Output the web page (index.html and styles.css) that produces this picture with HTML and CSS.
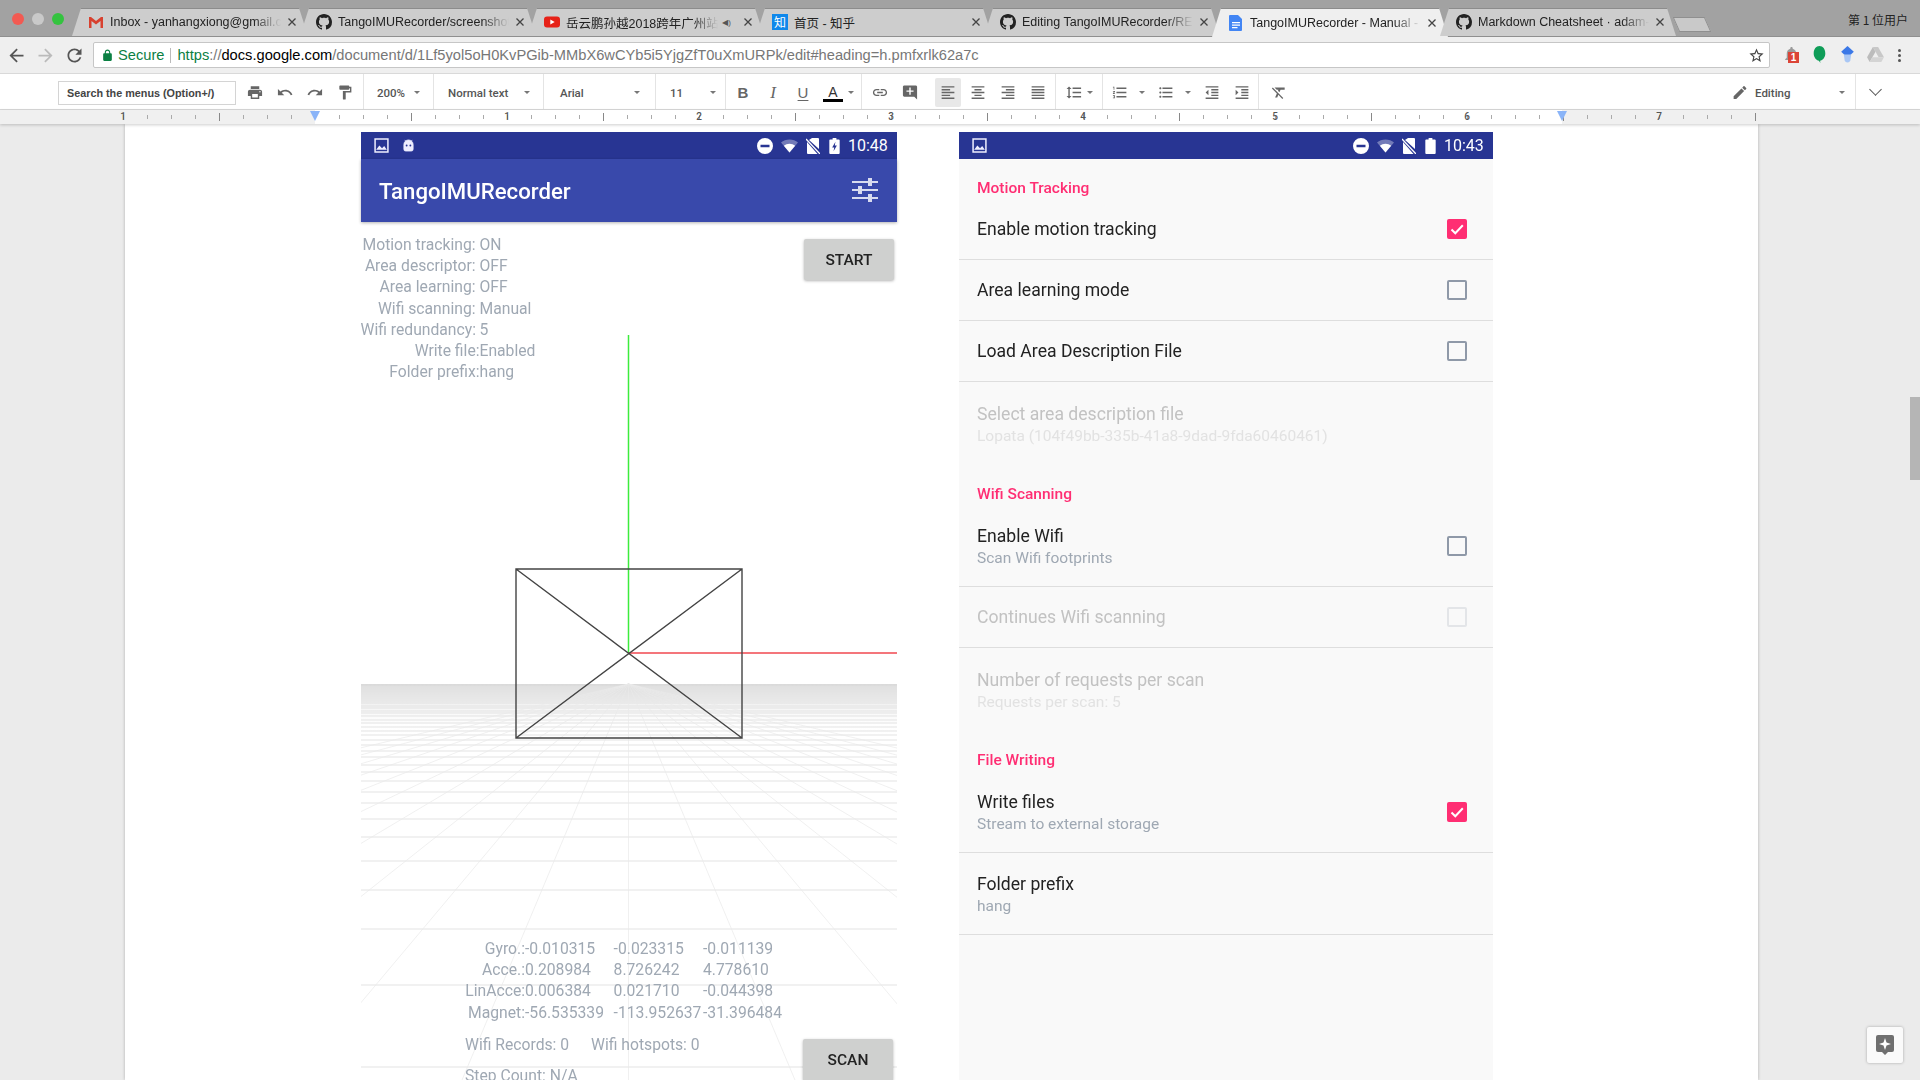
FILE: index.html
```html
<!DOCTYPE html>
<html lang="en">
<head>
  <meta charset="UTF-8" />
  <title>TangoIMURecorder - Manual - Google Docs</title>
  <link rel="stylesheet" href="styles.css">
</head>
<body>
  <svg class="defs" width="0" height="0">
    <symbol id="gh" viewBox="0 0 16 16"><path d="M8 0C3.58 0 0 3.58 0 8c0 3.54 2.29 6.53 5.47 7.59.4.07.55-.17.55-.38 0-.19-.01-.82-.01-1.49-2.01.37-2.53-.49-2.69-.94-.09-.23-.48-.94-.82-1.13-.28-.15-.68-.52-.01-.53.63-.01 1.08.58 1.23.82.72 1.21 1.87.87 2.33.66.07-.52.28-.87.51-1.07-1.78-.2-3.64-.89-3.64-3.95 0-.87.31-1.59.82-2.15-.08-.2-.36-1.02.08-2.12 0 0 .67-.21 2.2.82.64-.18 1.32-.27 2-.27.68 0 1.36.09 2 .27 1.53-1.04 2.2-.82 2.2-.82.44 1.1.16 1.92.08 2.12.51.56.82 1.27.82 2.15 0 3.07-1.87 3.75-3.65 3.95.29.25.54.73.54 1.48 0 1.07-.01 1.93-.01 2.2 0 .21.15.46.55.38A8.013 8.013 0 0016 8c0-4.42-3.58-8-8-8z"/></symbol>
    <symbol id="close" viewBox="0 0 10 10"><path d="M1.5 1.5l7 7M8.5 1.5l-7 7" stroke="#444" stroke-width="1.3" fill="none"/></symbol>
    <symbol id="print" viewBox="0 0 24 24"><path d="M19 8H5c-1.66 0-3 1.34-3 3v6h4v4h12v-4h4v-6c0-1.66-1.34-3-3-3zm-3 11H8v-5h8v5zm3-7c-.55 0-1-.45-1-1s.45-1 1-1 1 .45 1 1-.45 1-1 1zm-1-9H6v4h12V3z"/></symbol>
    <symbol id="undo" viewBox="0 0 24 24"><path d="M12.5 8c-2.65 0-5.05.99-6.9 2.6L2 7v9h9l-3.62-3.62c1.39-1.16 3.16-1.88 5.12-1.88 3.54 0 6.55 2.31 7.6 5.5l2.37-.78C21.08 11.03 17.15 8 12.5 8z"/></symbol>
    <symbol id="redo" viewBox="0 0 24 24"><path d="M18.4 10.6C16.55 8.99 14.15 8 11.5 8c-4.65 0-8.58 3.03-9.96 7.22L3.9 16c1.05-3.19 4.05-5.5 7.6-5.5 1.95 0 3.73.72 5.12 1.88L13 16h9V7l-3.6 3.6z"/></symbol>
    <symbol id="paint" viewBox="0 0 24 24"><path d="M18 4V3c0-.55-.45-1-1-1H5c-.55 0-1 .45-1 1v4c0 .55.45 1 1 1h12c.55 0 1-.45 1-1V6h1v4H9v11c0 .55.45 1 1 1h2c.55 0 1-.45 1-1v-9h8V4h-3z"/></symbol>
    <symbol id="link" viewBox="0 0 24 24"><path d="M3.9 12c0-1.71 1.39-3.1 3.1-3.1h4V7H7c-2.76 0-5 2.24-5 5s2.24 5 5 5h4v-1.9H7c-1.71 0-3.1-1.39-3.1-3.1zM8 13h8v-2H8v2zm9-6h-4v1.9h4c1.71 0 3.1 1.39 3.1 3.1s-1.39 3.1-3.1 3.1h-4V17h4c2.76 0 5-2.24 5-5s-2.24-5-5-5z"/></symbol>
    <symbol id="comment" viewBox="0 0 24 24"><path d="M20 2H4c-1.1 0-2 .9-2 2v12c0 1.1.9 2 2 2h14l4 4V4c0-1.1-.9-2-2-2zm-3 9h-4v4h-2v-4H7V9h4V5h2v4h4v2z"/></symbol>
    <symbol id="left" viewBox="0 0 24 24"><path d="M15 15H3v2h12v-2zm0-8H3v2h12V7zM3 13h18v-2H3v2zm0 8h18v-2H3v2zM3 3v2h18V3H3z"/></symbol>
    <symbol id="center" viewBox="0 0 24 24"><path d="M7 15v2h10v-2H7zm-4 6h18v-2H3v2zm0-8h18v-2H3v2zm4-6v2h10V7H7zM3 3v2h18V3H3z"/></symbol>
    <symbol id="right" viewBox="0 0 24 24"><path d="M3 21h18v-2H3v2zm6-4h12v-2H9v2zm-6-4h18v-2H3v2zm6-4h12V7H9v2zM3 3v2h18V3H3z"/></symbol>
    <symbol id="justify" viewBox="0 0 24 24"><path d="M3 21h18v-2H3v2zm0-4h18v-2H3v2zm0-4h18v-2H3v2zm0-4h18V7H3v2zm0-6v2h18V3H3z"/></symbol>
    <symbol id="spacing" viewBox="0 0 24 24"><path d="M6 7h2.5L5 3.5 1.5 7H4v10H1.5L5 20.5 8.5 17H6V7zm4-2v2h12V5H10zm0 14h12v-2H10v2zm0-6h12v-2H10v2z"/></symbol>
    <symbol id="numbers" viewBox="0 0 24 24"><path d="M2 17h2v.5H3v1h1v.5H2v1h3v-4H2v1zm1-9h1V4H2v1h1v3zm-1 3h1.8L2 13.1v.9h3v-1H3.2L5 10.9V10H2v1zm5-6v2h14V5H7zm0 14h14v-2H7v2zm0-6h14v-2H7v2z"/></symbol>
    <symbol id="bullets" viewBox="0 0 24 24"><path d="M4 10.5c-.83 0-1.5.67-1.5 1.5s.67 1.5 1.5 1.5 1.5-.67 1.5-1.5-.67-1.5-1.5-1.5zm0-6c-.83 0-1.5.67-1.5 1.5S3.17 7.5 4 7.5 5.5 6.83 5.5 6 4.83 4.5 4 4.5zm0 12c-.83 0-1.5.68-1.5 1.5s.68 1.5 1.5 1.5 1.5-.68 1.5-1.5-.67-1.5-1.5-1.5zM7 19h14v-2H7v2zm0-6h14v-2H7v2zm0-8v2h14V5H7z"/></symbol>
    <symbol id="outdent" viewBox="0 0 24 24"><path d="M11 17h10v-2H11v2zm-8-5l4 4V8l-4 4zm0 9h18v-2H3v2zM3 3v2h18V3H3zm8 6h10V7H11v2zm0 4h10v-2H11v2z"/></symbol>
    <symbol id="indent" viewBox="0 0 24 24"><path d="M3 21h18v-2H3v2zM3 8v8l4-4-4-4zm8 9h10v-2H11v2zM3 3v2h18V3H3zm8 6h10V7H11v2zm0 4h10v-2H11v2z"/></symbol>
    <symbol id="clear" viewBox="0 0 24 24"><path d="M3.27 5L2 6.27l6.97 6.97L6.5 19h3l1.57-3.66L16.73 21 18 19.73 3.55 5.27 3.27 5zM6 5v.18L8.82 8h2.4l-.72 1.68 2.1 2.1L14.21 8H20V5H6z"/></symbol>
    <symbol id="image" viewBox="0 0 14 14"><path d="M1 1h12v12H1z" fill="none" stroke="currentColor" stroke-width="1.4"/><path d="M2 11l3-4 2.5 2.5L9.5 7.5 12 11z" fill="currentColor"/></symbol>
    <symbol id="dnd" viewBox="0 0 16 16"><path fill-rule="evenodd" d="M8 0a8 8 0 100 16A8 8 0 008 0zM3.5 6.8h9v2.4h-9z" fill="currentColor"/></symbol>
    <symbol id="wifi" viewBox="0 0 18 14"><path d="M9 14L0 3.2C2.4 1.2 5.6 0 9 0s6.600 1.200 9 3.200z" fill="currentColor" opacity=".35"/><path d="M9 14L3 6.800C4.600 5.500 6.700 4.700 9 4.700s4.400.8 6 2.100z" fill="currentColor"/></symbol>
    <symbol id="nosim" viewBox="0 0 14 16"><path d="M3 2L6 0h6a1 1 0 011 1v10zM1 4v11a1 1 0 001 1h9.500z" fill="currentColor"/><path d="M0 1l14 15" stroke="currentColor" stroke-width="1.300"/></symbol>
    <symbol id="check" viewBox="0 0 20 20"><path d="M4.500 10.500l3.800 3.800 7.500-8" fill="none" stroke="#fff" stroke-width="2"/></symbol>
  </svg>

  <div class="chrome-top">
    <div class="traffic">
      <span class="dot red"></span><span class="dot grey"></span><span class="dot green"></span>
    </div>
    <div class="tabs">
      <div class="tab">
        <svg class="favicon" viewBox="0 0 16 16"><path d="M1 3h2l5 4 5-4h2v11h-2.500V7L8 10.500 3.500 7v7H1z" fill="#d8412f"/></svg>
        <span class="tab-title">Inbox - yanhangxiong@gmail.c</span>
        <svg class="tab-close"><use href="#close"/></svg>
      </div>
      <div class="tab">
        <svg class="favicon dark"><use href="#gh"/></svg>
        <span class="tab-title">TangoIMURecorder/screenshot</span>
        <svg class="tab-close"><use href="#close"/></svg>
      </div>
      <div class="tab">
        <svg class="favicon" viewBox="0 0 16 16"><rect x="0" y="2.500" width="16" height="11" rx="3" fill="#e62117"/><path d="M6.300 5.500v5l4.400-2.500z" fill="#fff"/></svg>
        <span class="tab-title short">岳云鹏孙越2018跨年广州站</span>
        <span class="speaker">◀)</span>
        <svg class="tab-close"><use href="#close"/></svg>
      </div>
      <div class="tab">
        <span class="favicon zhihu">知</span>
        <span class="tab-title plain">首页 - 知乎</span>
        <svg class="tab-close"><use href="#close"/></svg>
      </div>
      <div class="tab">
        <svg class="favicon dark"><use href="#gh"/></svg>
        <span class="tab-title">Editing TangoIMURecorder/RE</span>
        <svg class="tab-close"><use href="#close"/></svg>
      </div>
      <div class="tab active">
        <svg class="favicon" viewBox="0 0 16 16"><path d="M2 0h8l4 4v11a1 1 0 01-1 1H2a1 1 0 01-1-1V1a1 1 0 011-1z" fill="#4285f4"/><path d="M4 7h8v1.200H4zM4 9.500h8v1.200H4zM4 12h5.500v1.200H4z" fill="#fff"/></svg>
        <span class="tab-title">TangoIMURecorder - Manual -</span>
        <svg class="tab-close"><use href="#close"/></svg>
      </div>
      <div class="tab">
        <svg class="favicon dark"><use href="#gh"/></svg>
        <span class="tab-title">Markdown Cheatsheet · adam-</span>
        <svg class="tab-close"><use href="#close"/></svg>
      </div>
      <div class="new-tab"></div>
    </div>
    <div class="profile">第 1 位用户</div>
  </div>

  <div class="nav-bar">
    <svg class="nav-ic" viewBox="0 0 24 24"><path d="M20 11H7.830l5.590-5.590L12 4l-8 8 8 8 1.410-1.410L7.830 13H20v-2z"/></svg>
    <svg class="nav-ic off" viewBox="0 0 24 24"><path d="M12 4l-1.410 1.410L16.170 11H4v2h12.170l-5.580 5.590L12 20l8-8z"/></svg>
    <svg class="nav-ic" viewBox="0 0 24 24"><path d="M17.650 6.350C16.200 4.900 14.210 4 12 4c-4.420 0-7.990 3.580-7.990 8s3.570 8 7.990 8c3.730 0 6.840-2.550 7.730-6h-2.080c-.82 2.330-3.040 4-5.650 4-3.310 0-6-2.690-6-6s2.690-6 6-6c1.660 0 3.140.69 4.220 1.780L13 11h7V4l-2.350 2.350z"/></svg>
    <div class="omnibox">
      <svg class="lock" viewBox="0 0 24 24"><path d="M18 8h-1V6c0-2.760-2.240-5-5-5S7 3.240 7 6v2H6c-1.100 0-2 .9-2 2v10c0 1.100.9 2 2 2h12c1.100 0 2-.9 2-2V10c0-1.100-.9-2-2-2zM9 6c0-1.660 1.340-3 3-3s3 1.340 3 3v2H9V6z"/></svg>
      <span class="secure">Secure</span>
      <span class="url"><span class="scheme">https</span>://<span class="host">docs.google.com</span>/document/d/1Lf5yol5oH0KvPGib-MMbX6wCYb5i5YjgZfT0uXmURPk/edit#heading=h.pmfxrlk62a7c</span>
      <svg class="star" viewBox="0 0 24 24"><path d="M22 9.240l-7.190-.62L12 2 9.190 8.630 2 9.240l5.460 4.730L5.820 21 12 17.270 18.180 21l-1.630-7.030L22 9.240zM12 15.400l-3.760 2.270 1-4.280-3.320-2.880 4.380-.38L12 6.100l1.710 4.040 4.380.38-3.320 2.880 1 4.280L12 15.400z"/></svg>
    </div>
    <div class="extensions">
      <span class="ext bell">
        <svg viewBox="0 0 24 24"><path d="M12 22c1.100 0 2-.9 2-2h-4c0 1.100.9 2 2 2zm6-6v-5c0-3.070-1.640-5.640-4.500-6.320V4c0-.83-.67-1.500-1.500-1.500s-1.500.67-1.500 1.500v.68C7.630 5.360 6 7.920 6 11v5l-2 2v1h16v-1l-2-2z" fill="#9a9a9a"/></svg>
        <span class="badge">1</span>
      </span>
      <span class="ext">
        <svg viewBox="0 0 18 18"><path d="M9 1c3.300 0 5.500 3 5.500 7 0 3.600-2.400 6.400-5 7l.4 2-1.500-2C6 14.400 3.500 11.600 3.500 8 3.500 4 5.700 1 9 1z" fill="#0f9d58"/></svg>
      </span>
      <span class="ext">
        <svg viewBox="0 0 18 18"><path d="M9 1l6 5.500-6 5.500-6-5.500z" fill="#3b78e7"/><path d="M5.500 9h7l-.8 5.500a2.800 2.800 0 01-5.400 0z" fill="#a9c7f5"/></svg>
      </span>
      <span class="ext">
        <svg viewBox="0 0 18 18"><path d="M6.500 2h5L17 11.500h-5z" fill="#c8c8c8"/><path d="M6.500 2L1 11.500 3.500 16 9 6.500z" fill="#bcbcbc"/><path d="M3.500 16h11l2.500-4.500H6z" fill="#d4d4d4"/></svg>
      </span>
      <span class="kebab"><i></i><i></i><i></i></span>
    </div>
  </div>

  <div class="doc-toolbar">
    <div class="group g-first">
      <div class="menu-search">Search the menus (Option+/)</div>
      <svg class="tool"><use href="#print"/></svg>
      <svg class="tool"><use href="#undo"/></svg>
      <svg class="tool"><use href="#redo"/></svg>
      <svg class="tool"><use href="#paint"/></svg>
    </div>
    <div class="group pick g-zoom"><span>200%</span><i class="caret"></i></div>
    <div class="group pick g-style"><span>Normal text</span><i class="caret"></i></div>
    <div class="group pick g-font"><span>Arial</span><i class="caret"></i></div>
    <div class="group pick g-size"><span>11</span><i class="caret"></i></div>
    <div class="group g-format">
      <span class="fmt bold">B</span>
      <span class="fmt italic">I</span>
      <span class="fmt under">U</span>
      <span class="fmt color">A</span>
      <i class="caret"></i>
    </div>
    <div class="group g-insert">
      <svg class="tool"><use href="#link"/></svg>
      <svg class="tool"><use href="#comment"/></svg>
    </div>
    <div class="group g-align">
      <span class="tool-wrap on"><svg class="tool"><use href="#left"/></svg></span>
      <svg class="tool"><use href="#center"/></svg>
      <svg class="tool"><use href="#right"/></svg>
      <svg class="tool"><use href="#justify"/></svg>
    </div>
    <div class="group g-spacing">
      <svg class="tool"><use href="#spacing"/></svg>
      <i class="caret"></i>
    </div>
    <div class="group g-lists">
      <svg class="tool"><use href="#numbers"/></svg><i class="caret"></i>
      <svg class="tool"><use href="#bullets"/></svg><i class="caret"></i>
      <svg class="tool"><use href="#outdent"/></svg>
      <svg class="tool"><use href="#indent"/></svg>
    </div>
    <div class="group g-clear"><svg class="tool"><use href="#clear"/></svg></div>
    <div class="group g-edit">
      <svg class="tool" viewBox="0 0 24 24"><path d="M3 17.250V21h3.750L17.810 9.940l-3.750-3.750L3 17.250zM20.710 7.040c.39-.39.39-1.020 0-1.410l-2.340-2.340c-.39-.39-1.020-.39-1.410 0l-1.830 1.830 3.750 3.750 1.830-1.830z"/></svg>
      <span>Editing</span>
      <i class="caret"></i>
    </div>
    <div class="chevron"></div>
  </div>

  <div class="ruler-row">
    <div class="ruler">
      <span>1</span><span></span><span>1</span><span>2</span><span>3</span><span>4</span><span>5</span><span>6</span><span>7</span>
      <i class="marker m-left"></i>
      <i class="marker m-right"></i>
    </div>
  </div>

  <div class="workspace">
    <div class="paper">
      <div class="phone phone-main">
        <div class="statusbar">
          <svg class="st-ic"><use href="#image"/></svg>
          <svg class="st-ic robot" viewBox="0 0 14 14"><path d="M2 6a5 5 0 0110 0v5a2 2 0 01-2 2H4a2 2 0 01-2-2zM3 1l1.500 2M11 1L9.500 3" fill="currentColor" stroke="currentColor" stroke-width=".8"/><circle cx="5" cy="7" r="1" fill="#283593"/><circle cx="9" cy="7" r="1" fill="#283593"/></svg>
          <span class="st-space"></span>
          <svg class="st-dnd"><use href="#dnd"/></svg>
          <svg class="st-wifi"><use href="#wifi"/></svg>
          <svg class="st-sim"><use href="#nosim"/></svg>
          <svg class="st-batt" viewBox="0 0 11 17"><path d="M3.500 0h4v1.500H10a1 1 0 011 1V16a1 1 0 01-1 1H1a1 1 0 01-1-1V2.500a1 1 0 011-1h2.500z" fill="currentColor"/><path d="M6.500 4L3 10h2.200l-.7 4L8 8H5.800z" fill="#283593"/></svg>
          <span class="st-time">10:48</span>
        </div>
        <div class="appbar">
          <span class="app-title">TangoIMURecorder</span>
          <svg class="tune" viewBox="0 0 28 28"><path d="M1 5h26M1 13h26M1 21h26" stroke="#d8dbef" stroke-width="2"/><path d="M17 1h4v8h-4zM7 9h4v8H7zM17 17h4v8h-4z" fill="#d8dbef"/></svg>
        </div>
        <div class="scene-wrap">
          <svg class="scene" viewBox="361 222 536 858" width="536" height="858">
            <defs>
              <linearGradient id="haze" x1="0" y1="0" x2="0" y2="1">
                <stop offset="0" stop-color="#d9d9d9"/>
                <stop offset="1" stop-color="#ffffff" stop-opacity="0"/>
              </linearGradient>
            </defs>
            <rect x="361" y="684" width="536" height="50" fill="url(#haze)"/>
            <path class="ground" d="M361 1067H897M361 985H897M361 929H897M361 890H897M361 861H897M361 837H897M361 819H897M361 803H897M361 792H897M361 781H897M361 772H897M361 765H897M361 757H897M361 751H897M361 745H897M361 740H897M361 735H897M361 731H897M361 727H897M361 723H897M361 720H897M361 716H897M361 713H897M361 711H897M361 708H897M361 706H897M361 703H897M361 701H897M361 699H897M361 697H897M361 695H897M361 693H897M361 691H897M361 689H897M361 687H897"/>
            <path class="fan" d="M628.500 684V1080M628.500 684L795 1080M628.500 684L961 1080M628.500 684L1127 1080M628.500 684L1293 1080M628.500 684L1459 1080M628.500 684L1625 1080M628.500 684L1791 1080M628.500 684L1957 1080M628.500 684L2123 1080M628.500 684L2289 1080M628.500 684L462 1080M628.500 684L296 1080M628.500 684L130 1080M628.500 684L-36 1080M628.500 684L-202 1080M628.500 684L-368 1080M628.500 684L-534 1080M628.500 684L-700 1080M628.500 684L-866 1080M628.500 684L-1032 1080"/>
            <path class="axis-y" d="M628.500 335V653"/>
            <path class="axis-x" d="M628.500 653H897"/>
            <path class="frustum" d="M516 569H742V738H516zM516 569L742 738M742 569L516 738"/>
          </svg>
          <div class="hud-top">
            <div class="status-grid">
              <span class="lbl gap">Motion tracking:</span><span>ON</span>
              <span class="lbl gap">Area descriptor:</span><span>OFF</span>
              <span class="lbl gap">Area learning:</span><span>OFF</span>
              <span class="lbl gap">Wifi scanning:</span><span>Manual</span>
              <span class="lbl gap">Wifi redundancy:</span><span>5</span>
              <span class="lbl">Write file:</span><span>Enabled</span>
              <span class="lbl">Folder prefix:</span><span>hang</span>
            </div>
            <button class="raised btn-start">START</button>
          </div>
          <div class="hud-bottom">
            <div class="readout">
              <div class="sensors">
                <span class="lbl">Gyro.:</span><span>-0.010315</span><span>-0.023315</span><span>-0.011139</span>
                <span class="lbl">Acce.:</span><span>0.208984</span><span>8.726242</span><span>4.778610</span>
                <span class="lbl">LinAcce:</span><span>0.006384</span><span>0.021710</span><span>-0.044398</span>
                <span class="lbl">Magnet:</span><span>-56.535339</span><span>-113.952637</span><span>-31.396484</span>
              </div>
              <div class="wifi-counts"><span>Wifi Records: 0</span><span>Wifi hotspots: 0</span></div>
              <div class="steps">Step Count: N/A</div>
            </div>
            <button class="raised btn-scan">SCAN</button>
          </div>
        </div>
      </div>

      <div class="phone phone-settings">
        <div class="statusbar">
          <svg class="st-ic"><use href="#image"/></svg>
          <span class="st-space"></span>
          <svg class="st-dnd"><use href="#dnd"/></svg>
          <svg class="st-wifi"><use href="#wifi"/></svg>
          <svg class="st-sim"><use href="#nosim"/></svg>
          <svg class="st-batt" viewBox="0 0 11 17"><path d="M3.500 0h4v1.500H10a1 1 0 011 1V16a1 1 0 01-1 1H1a1 1 0 01-1-1V2.500a1 1 0 011-1h2.500z" fill="currentColor"/></svg>
          <span class="st-time">10:43</span>
        </div>
        <div class="prefs">
          <div class="pref-head">Motion Tracking</div>
          <div class="pref"><div class="pref-text"><div class="pref-title">Enable motion tracking</div></div><span class="box on"><svg><use href="#check"/></svg></span></div>
          <div class="pref"><div class="pref-text"><div class="pref-title">Area learning mode</div></div><span class="box"></span></div>
          <div class="pref"><div class="pref-text"><div class="pref-title">Load Area Description File</div></div><span class="box"></span></div>
          <div class="pref tall off last"><div class="pref-text"><div class="pref-title">Select area description file</div><div class="pref-sub">Lopata (104f49bb-335b-41a8-9dad-9fda60460461)</div></div></div>
          <div class="pref-head">Wifi Scanning</div>
          <div class="pref tall"><div class="pref-text"><div class="pref-title">Enable Wifi</div><div class="pref-sub">Scan Wifi footprints</div></div><span class="box"></span></div>
          <div class="pref off"><div class="pref-text"><div class="pref-title">Continues Wifi scanning</div></div><span class="box"></span></div>
          <div class="pref tall off last"><div class="pref-text"><div class="pref-title">Number of requests per scan</div><div class="pref-sub">Requests per scan: 5</div></div></div>
          <div class="pref-head">File Writing</div>
          <div class="pref tall"><div class="pref-text"><div class="pref-title">Write files</div><div class="pref-sub">Stream to external storage</div></div><span class="box on"><svg><use href="#check"/></svg></span></div>
          <div class="pref tall"><div class="pref-text"><div class="pref-title">Folder prefix</div><div class="pref-sub">hang</div></div></div>
        </div>
      </div>
    </div>
    <div class="scroll-thumb"></div>
    <div class="explore">
      <svg viewBox="0 0 18 20" width="18" height="20"><path d="M2 0h14a2 2 0 012 2v13a2 2 0 01-2 2h-4l-3 3-3-3H2a2 2 0 01-2-2V2a2 2 0 012-2z" fill="#6f6f6f"/><path d="M9 3l1.500 4.500L15 9l-4.500 1.500L9 15l-1.500-4.500L3 9l4.500-1.500z" fill="#fff"/></svg>
    </div>
  </div>
</body>
</html>
```

FILE: styles.css
```css
:root {
  --status: #283593;
  --primary: #3949ab;
  --accent: #ff2e73;
  --hud: #9fa8b3;
  --tool: #666;
}
* { box-sizing: border-box; }
html, body { height: 100%; }
body {
  margin: 0;
  width: 1920px;
  height: 1080px;
  overflow: hidden;
  display: flex;
  flex-direction: column;
  background: #ebebeb;
  font-family: "Liberation Sans", Arial, sans-serif;
}
.defs { position: absolute; }
i { font-style: normal; }

/* tab strip */
.chrome-top {
  height: 37px;
  flex: none;
  display: flex;
  background: #a2a2a2;
  border-bottom: 1px solid #8f8f8f;
}
.traffic { width: 72px; flex: none; display: flex; gap: 8px; padding: 13px 0 0 12px; }
.dot { width: 12px; height: 12px; border-radius: 50%; }
.dot.red { background: #f25a52; }
.dot.grey { background: #c9c9c9; }
.dot.green { background: #34c33f; }
.tabs { display: flex; padding-top: 8px; flex: none; width: 1700px; }
.tab {
  width: 236px;
  height: 28px;
  margin-right: -8px;
  flex: none;
  display: flex;
  align-items: center;
  padding: 0 11px 0 16px;
  background: #cdcdcd;
  clip-path: polygon(0 100%, 9px 0, calc(100% - 9px) 0, 100% 100%);
  font-size: 12.5px;
  color: #222;
  box-shadow: inset 0 1px 0 #8c8c8c;
}
.tab.active { background: #efefef; height: 29px; }
.favicon { width: 16px; height: 16px; flex: none; margin-right: 6px; }
.favicon.dark { fill: #222; }
.zhihu {
  background: #0f88eb;
  color: #fff;
  font: 12px "Noto Sans CJK SC", sans-serif;
  line-height: 16px;
  text-align: center;
}
.tab-title {
  flex: 1;
  min-width: 0;
  white-space: nowrap;
  font-family: "Liberation Sans", "Noto Sans CJK SC", sans-serif;
  -webkit-mask-image: linear-gradient(to right, #000 84%, transparent 100%);
  mask-image: linear-gradient(to right, #000 84%, transparent 100%);
}
.tab-title.plain { -webkit-mask-image: none; mask-image: none; }
.speaker { font-size: 8px; color: #555; margin: 0 6px 0 4px; white-space: nowrap; }
.tab-close { width: 10px; height: 10px; flex: none; margin-left: 6px; }
.new-tab {
  width: 32px;
  height: 15px;
  margin: 9px 0 0 8px;
  background: #c9c9c9;
  transform: skewX(24deg);
  border: 1px solid #8f8f8f;
}
.profile {
  margin-left: auto;
  padding: 11px 12px 0 0;
  font: 12px "Noto Sans CJK SC", sans-serif;
  color: #222;
}

/* url bar */
.nav-bar {
  height: 36px;
  flex: none;
  display: flex;
  align-items: center;
  background: #efefef;
  padding-left: 6px;
}
.nav-ic { width: 21px; height: 21px; margin-right: 8px; fill: #555; flex: none; }
.nav-ic.off { fill: #bbb; }
.omnibox {
  width: 1677px;
  height: 26px;
  display: flex;
  align-items: center;
  background: #fff;
  border: 1px solid #c6c6c6;
  border-radius: 2px;
  padding-left: 7px;
  font-size: 14.67px;
  flex: none;
}
.lock { width: 13px; height: 13px; fill: #0b8043; flex: none; }
.secure {
  color: #0b8043;
  margin-left: 4px;
  padding-right: 6px;
  margin-right: 6px;
  border-right: 1px solid #bbb;
  line-height: 15px;
}
.url { color: #777; white-space: nowrap; }
.scheme { color: #0b8043; }
.host { color: #000; }
.star { width: 17px; height: 17px; fill: #444; margin-left: auto; margin-right: 4px; flex: none; }
.extensions { flex: 1; display: flex; align-items: center; padding-left: 12px; }
.ext { width: 28px; height: 20px; flex: none; position: relative; display: block; }
.ext svg { width: 19px; height: 19px; display: block; }
.badge {
  position: absolute;
  left: 6px;
  top: 7px;
  width: 11px;
  height: 11px;
  background: #db4437;
  color: #fff;
  font: bold 10px/11px "Liberation Sans", sans-serif;
  text-align: center;
}
.kebab { display: flex; flex-direction: column; gap: 2px; margin-left: 4px; }
.kebab i { width: 3px; height: 3px; background: #555; border-radius: 50%; }

/* docs toolbar */
.doc-toolbar {
  height: 37px;
  flex: none;
  display: flex;
  background: #fff;
  border-top: 1px solid #d9d9d9;
  border-bottom: 1px solid #d9d9d9;
  font: 500 11.5px Roboto, sans-serif;
  color: #555;
}
.group {
  height: 100%;
  padding-top: 2px;
  display: flex;
  align-items: center;
  flex: none;
  border-right: 1px solid #e4e4e4;
}
.tool { width: 30px; height: 17px; fill: var(--tool); flex: none; }
.g-first { width: 364px; padding-left: 58px; }
.menu-search {
  width: 178px;
  height: 24px;
  margin-right: 4px;
  border: 1px solid #d4d4d4;
  padding-left: 8px;
  font: bold 10.800px/22px "Liberation Sans", sans-serif;
  color: #444;
  white-space: nowrap;
  overflow: hidden;
}
.pick { padding-left: 13px; justify-content: space-between; padding-right: 13px; }
.g-zoom { width: 70px; }
.g-style { width: 110px; padding-left: 14px; }
.g-font { width: 112px; padding-left: 16px; padding-right: 15px; }
.g-size { width: 70px; padding-left: 14px; padding-right: 9px; }
.caret {
  width: 0;
  height: 0;
  border: 3px solid transparent;
  border-top: 3px solid #777;
  border-bottom: 0;
  flex: none;
}
.g-format { width: 136px; padding-left: 2px; }
.fmt {
  width: 30px;
  text-align: center;
  font: 15px "Liberation Sans", sans-serif;
  color: var(--tool);
  flex: none;
}
.bold { font-weight: bold; }
.italic { font-family: "Liberation Serif", serif; font-style: italic; font-size: 17px; }
.under { text-decoration: underline; text-underline-offset: 2px; }
.color { color: #333; box-shadow: inset 0 -3px 0 #000; margin: 0 5px; width: 20px; line-height: 19px; font-size: 14px; }
.g-insert { width: 70px; padding-left: 3px; border-right: 0; }
.g-align { width: 124px; padding-left: 1px; }
.tool-wrap { display: block; width: 30px; height: 29px; padding-top: 6px; border-radius: 2px; flex: none; }
.tool-wrap.on { background: #e8e8e8; width: 26px; margin: 0 2px; }
.tool-wrap.on .tool { width: 26px; display: block; }
.g-spacing { width: 47px; padding-left: 3px; }
.g-spacing .caret { margin-left: -2px; }
.g-lists { width: 156px; padding-left: 2px; }
.g-lists .caret { margin: 0 6px 0 4px; }
.g-clear { width: 50px; padding-left: 5px; border-right: 0; }
.g-edit {
  width: 131px;
  margin-left: auto;
  padding-right: 10px;
}
.g-edit span { flex: 1; }
.chevron {
  width: 9px;
  height: 9px;
  flex: none;
  border-right: 1.600px solid #555;
  border-bottom: 1.600px solid #555;
  transform: rotate(45deg);
  margin: 11px 40px 0 15px;
}

/* ruler */
.ruler-row {
  height: 14px;
  flex: none;
  background: #f0f0f0;
  box-shadow: 0 1px 3px rgba(0, 0, 0, .2);
  position: relative;
  z-index: 2;
}
.ruler {
  position: relative;
  margin-left: 27px;
  width: 1729px;
  height: 14px;
  display: flex;
  background:
    repeating-linear-gradient(to right, #888 0 1px, transparent 1px 192px) 192px 3px / 100% 8px no-repeat,
    repeating-linear-gradient(to right, #aaa 0 1px, transparent 1px 24px) 96px 5px / 100% 4px no-repeat,
    linear-gradient(to right, transparent 288px, #fff 288px, #fff 1535px, transparent 1535px);
  font: 500 10px/14px Roboto, sans-serif;
  color: #555;
}
.ruler span { width: 192px; text-align: center; flex: none; }
.marker {
  position: absolute;
  top: 1px;
  width: 0;
  height: 0;
  border: 5px solid transparent;
  border-top: 10px solid #8ab4f8;
  border-bottom: 0;
}
.m-left { left: 283px; }
.m-right { left: 1530px; }

/* document */
.workspace { flex: 1; min-height: 0; position: relative; overflow: hidden; }
.paper {
  width: 1633px;
  height: 100%;
  margin-left: 125px;
  padding: 8px 0 0 236px;
  background: #fff;
  display: flex;
  gap: 62px;
  box-shadow: 0 0 3px rgba(0, 0, 0, .25);
  overflow: hidden;
}
.phone {
  flex: none;
  display: flex;
  flex-direction: column;
  font-family: Roboto, sans-serif;
  height: 1000px;
  filter: blur(.3px);
}
.phone-main { width: 536px; }
.phone-settings { width: 534px; background: #f9f9f9; }
.statusbar {
  height: 27px;
  flex: none;
  display: flex;
  align-items: center;
  background: var(--status);
  color: #fff;
  padding: 0 9px 0 13px;
}
.st-ic { width: 15px; height: 15px; color: #eef; flex: none; margin-right: 13px; }
.st-ic.robot { width: 13px; }
.st-space { flex: 1; }
.st-dnd { width: 16px; height: 16px; margin-right: 8px; flex: none; }
.st-wifi { width: 17px; height: 14px; margin-right: 8px; flex: none; }
.st-sim { width: 14px; height: 16px; margin-right: 9px; flex: none; }
.st-batt { width: 11px; height: 16px; margin-right: 8px; flex: none; }
.st-time { font-size: 16px; width: 40px; }
.appbar {
  height: 63px;
  flex: none;
  display: flex;
  align-items: center;
  justify-content: space-between;
  padding: 0 18px;
  background: var(--primary);
  box-shadow: 0 1px 3px rgba(0, 0, 0, .3);
  position: relative;
  z-index: 1;
}
.app-title { color: #fff; font-size: 22.2px; font-weight: 500; }
.tune { width: 28px; height: 28px; }

/* camera view with the text drawn on top of it */
.scene-wrap { position: relative; flex: 1; color: var(--hud); font-size: 15.7px; line-height: 21.2px; }
.scene { position: absolute; left: 0; top: 0; }
.ground { fill: none; stroke: #e3e3e3; stroke-width: 1; }
.fan { fill: none; stroke: #e9e9e9; stroke-width: .7; }
.axis-y { stroke: #3cec3c; stroke-width: 1.500; }
.axis-x { stroke: #f0474f; stroke-width: 1.300; }
.frustum { fill: none; stroke: #444; stroke-width: 1.400; }
.hud-top, .hud-bottom { position: relative; display: flex; justify-content: space-between; }
.hud-top { height: 716px; padding: 12px 2px 0 0; align-items: flex-start; }
.status-grid { display: grid; grid-template-columns: 119px auto; margin-left: -.5px; }
.lbl { text-align: right; white-space: nowrap; }
.lbl.gap { padding-right: 4px; }
.raised {
  width: 90px;
  border: 0;
  border-radius: 2px;
  background: #cfd0cf;
  color: #222;
  font: 500 15.500px Roboto, sans-serif;
  box-shadow: 0 1px 3px rgba(0, 0, 0, .3);
  padding: 0;
}
.btn-start { height: 41px; margin: 5px 1px 0 0; }
.btn-scan { height: 42px; margin-top: 101px; }
.hud-bottom { padding-right: 4px; align-items: flex-start; }
.readout { margin-left: 104px; }
.sensors { display: grid; grid-template-columns: 60px 88.600px 89.400px auto; white-space: nowrap; }
.wifi-counts { display: flex; margin-top: 11px; }
.wifi-counts span { width: 126px; white-space: nowrap; }
.steps { margin-top: 10px; white-space: nowrap; }

/* settings list */
.prefs { flex: 1; font-size: 17.6px; }
.pref-head {
  height: 39.500px;
  padding: 19px 0 0 18px;
  color: var(--accent);
  font-size: 15.500px;
  font-weight: 500;
  line-height: 20px;
}
.pref {
  height: 61px;
  padding: 0 18px;
  display: flex;
  align-items: center;
  justify-content: space-between;
  border-bottom: 1.500px solid #dedede;
  color: #222;
}
.pref.tall { height: 82px; padding-top: 2px; }
.pref.tall.last { height: 83.500px; border-bottom: 0; }
.pref-title { line-height: 22px; }
.pref-sub { font-size: 15.500px; line-height: 20px; margin-top: 1px; color: var(--hud); }
.pref.off .pref-title { color: #c2c2c2; }
.pref.off .pref-sub { color: #e2e2e2; }
.box {
  width: 20px;
  height: 20px;
  margin-right: 8px;
  border: 2px solid #8f99a8;
  border-radius: 2px;
  flex: none;
}
.box.on { background: var(--accent); border: 0; }
.box svg { width: 20px; height: 20px; display: block; }
.pref.off .box { border-color: #e3e5e8; }

.scroll-thumb {
  position: absolute;
  right: 0;
  top: 273px;
  width: 10px;
  height: 83px;
  background: #b5b5b5;
}
.explore {
  position: absolute;
  left: 1867px;
  top: 903px;
  width: 36px;
  height: 36px;
  display: flex;
  align-items: center;
  justify-content: center;
  background: #fafafa;
  border-radius: 2px;
  box-shadow: 0 0 3px rgba(0, 0, 0, .3);
}
```
